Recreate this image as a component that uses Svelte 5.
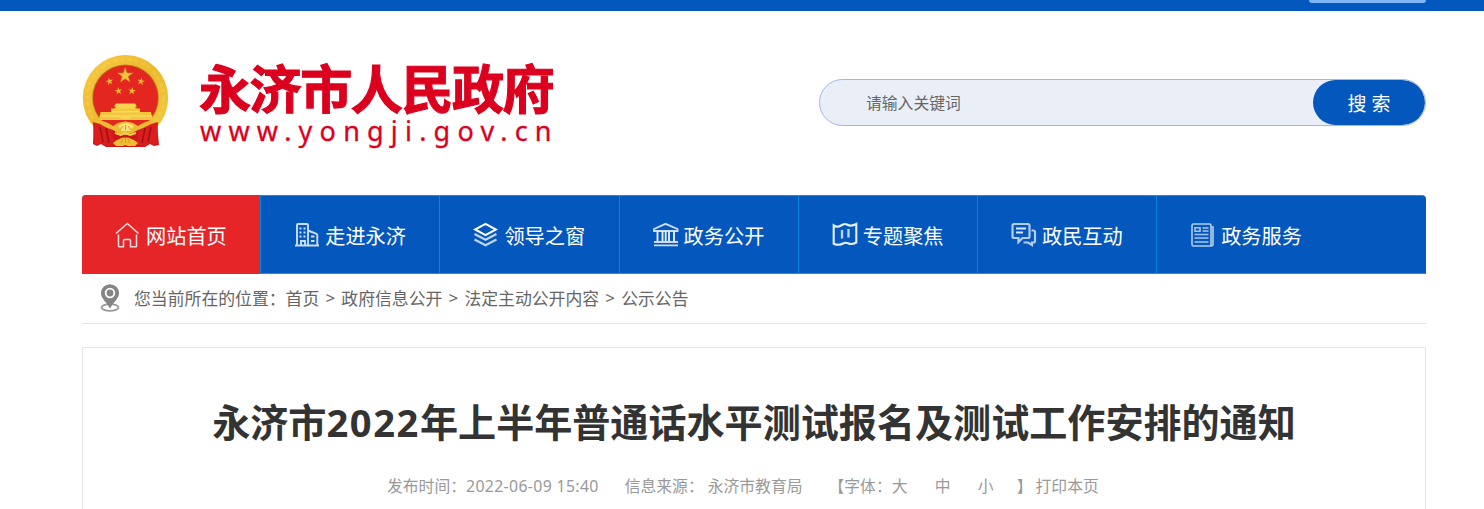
<script lang="ts">
  type NavItem = { label: string; icon: string; active?: boolean };

  const nav: NavItem[] = [
    { label: '网站首页', icon: 'home', active: true },
    { label: '走进永济', icon: 'building' },
    { label: '领导之窗', icon: 'layers' },
    { label: '政务公开', icon: 'bank' },
    { label: '专题聚焦', icon: 'map' },
    { label: '政民互动', icon: 'chat' },
    { label: '政务服务', icon: 'news' }
  ];

  const crumbs = ['首页', '政府信息公开', '法定主动公开内容', '公示公告'];
  const sizes = ['大', '中', '小'];

  const bigStar = '0,-8 1.9,-2.5 7.6,-2.5 3,1 4.7,6.5 0,3.2 -4.7,6.5 -3,1 -7.6,-2.5 -1.9,-2.5';
  const smallStars = [
    [34.5, 36.5, -12],
    [66, 36.5, 12],
    [43.5, 46, -8],
    [57, 46, 8]
  ];
</script>

<div class="topbar">
  <div class="wrap topbar-inner"><span class="topbar-tab"></span></div>
</div>

<div class="wrap">
  <header class="header">
    <div class="logo">
      <svg class="emblem" width="88" height="94" viewBox="6 8 88 94">
        <defs>
          <linearGradient id="gold" x1="0" y1="0" x2="1" y2="1">
            <stop offset="0" stop-color="#f6cb45" />
            <stop offset="0.5" stop-color="#edb92c" />
            <stop offset="1" stop-color="#f3cc43" />
          </linearGradient>
        </defs>
        <ellipse cx="50.5" cy="53" rx="42.7" ry="43" fill="url(#gold)" />
        <ellipse cx="50.5" cy="53" rx="38" ry="38.5" fill="none" stroke="#f9dc63" stroke-width="3" stroke-dasharray="5 2 3 4" opacity="0.3" />
        <ellipse cx="50.5" cy="52.8" rx="33.3" ry="33.3" fill="#b9791d" />
        <ellipse cx="50.5" cy="53" rx="32.4" ry="32.6" fill="#e32720" />
        <polygon points={bigStar} transform="translate(50.2 30.5)" fill="#f4c43b" stroke="#c98a1e" stroke-width="0.5" />
        {#each smallStars as [x, y, r]}
          <polygon points={bigStar} transform="translate({x} {y}) rotate({r}) scale(0.5)" fill="#f0b52e" />
        {/each}
        <path d="M41 58.500h19l2 3h-1.500v2h2v3H38.500v-3h2v-2H39z" fill="#f8d54c" />
        <path d="M36 63.500h29v3.500h11l1.500 8H24l1.500-8H36z" fill="#f4c63b" />
        <path d="M37 66.800h27M24.500 71h53" stroke="#fbe07a" stroke-width="1" />
        <path d="M46 70h9v4h-9z" fill="#f9d650" />
        <path d="M19 80l17 2 8 6h13l8-6 17-2 2 20-5 1-4-2-5 3H31l-5-3-4 2-4-2z" fill="#c9171a" />
        <path d="M18 77l7 2 12 6 3 15-9 1-5-3-3 2-4-1z" fill="#d91e1d" />
        <path d="M83 77l-7 2-12 6-3 15 9 1 5-3 3 2 4-1z" fill="#d91e1d" />
        <path d="M25 82l3 15M31 83l3 15M76 82l-3 15M70 83l-3 15" stroke="#9d0f14" stroke-width="1.400" fill="none" />
        <path d="M22 75q9 1 16 6l5-3q7-3 15 0l5 3q7-5 16-6-6 7-16 10-6 4-13 5-7-1-12-5-11-3-16-10z" fill="#edbb32" />
        <path d="M43 81q8-6 16 0l-4 5h-9z" fill="#f9e077" />
        <path d="M38 98q12-11 25 0l-3 3h-7l-3-1-2 1h-7z" fill="#f0bd34" />
        <path d="M40 88l6 2 4-2 5 2 6-2" stroke="#f7d14a" stroke-width="2" fill="none" />
        <path d="M45 85l3-4M50.500 85v-5M56 85l-3-4M46 98l2-4M50.500 98v-5M55 98l-2-4" stroke="#cf891e" stroke-width="0.800" />
      </svg>
      <div class="logo-text">
        <div class="logo-name">永济市人民政府</div>
        <div class="logo-url">www.yongji.gov.cn</div>
      </div>
    </div>
    <form class="search">
      <input type="text" placeholder="请输入关键词" />
      <button type="button">搜 索</button>
    </form>
  </header>

  <nav class="nav">
    {#each nav as item}
      <a class="nav-item" class:active={item.active} href="#top">
        <svg width="26" height="26" viewBox="0 0 26 26" fill="none" stroke="#fff" stroke-width="1.600">
          {#if item.icon === 'home'}
            <path d="M1 11.500L12.300 1.500l11.200 10M3.500 12.500V24q0 .8.800.8H8.500V18.500q0-1 1-1h5q1 0 1 1v6.300h5.200q.8 0 .8-.8V12.500" stroke-width="1.500" opacity=".85" />
          {:else if item.icon === 'building'}
            <path d="M1 23.500h24M3 23V3q0-1 1-1h9q1 0 1 1v20M14 8.500l8 3.200q1.300.5 1.300 1.500V23M7 23v-4h4v4" stroke-width="1.900" opacity=".8" />
            <path d="M6.500 5.500v2M10.500 5.500v2M6.500 9.500v2M10.500 9.500v2M6.500 13.500v2M10.500 13.500v2M17 14.500h3.500M17 19h3.500" stroke-width="2" opacity=".8" />
          {:else if item.icon === 'layers'}
            <path d="M12.500 1.800L23 7.500l-10.500 5.700L2 7.500z" stroke-width="2" />
            <path d="M1.500 12l11 5.700 11-5.700M1.500 17.500l11 5.700 11-5.700" stroke-width="2.300" opacity=".75" />
          {:else if item.icon === 'bank'}
            <path d="M1 9V7L12.500 1.800 24.500 7v2zM1 20h24M1 23.400h24" stroke-width="1.900" opacity=".8" />
            <path d="M4.500 9.500V19M9.500 9.500V19M12.700 9.500V19M16 9.500V19M21 9.500V19" stroke-width="1.900" opacity=".9" />
          {:else if item.icon === 'map'}
            <path d="M1.700 3.300q3.500 2.700 7.300.2l2-1q2-.9 4 0 4 2.500 9.300-.5v18.500q-4.500 2.500-8.300.7-2.500-1-5 .3-4 2.500-9.300.2z" stroke-width="2.100" opacity=".9" />
            <path d="M10 8v8.500M16.500 7v8.500" stroke-width="2.300" opacity=".75" />
          {:else if item.icon === 'chat'}
            <path d="M3 2h14q1.500 0 1.500 1.500v11q0 1.500-1.500 1.500h-5.500l-4 4v-4H3q-1.500 0-1.500-1.500v-11Q1.500 2 3 2z" stroke-width="2.200" opacity=".7" />
            <path d="M5 6.500h10M5 10.500h7" stroke-width="1.900" opacity=".85" />
            <path d="M20.500 8.500h2q1.500 0 1.500 1.500v9q0 1.500-1.500 1.500H21V23l-4-2.500h-4.500" stroke-width="2.100" opacity=".7" />
          {:else}
            <path d="M3.500 2h16q1.500 0 1.500 1.500V24H3.500Q2 24 2 22.500v-19Q2 2 3.500 2zM21 5h2v17q0 2-2 2" stroke-width="1.600" opacity=".7" />
            <path d="M5 5.700h5v3.600H5zM12.500 6h6M12.500 9h6M4.500 12.500h14M4.500 16h14M4.500 20h14" stroke-width="1.600" opacity=".65" />
          {/if}
        </svg>
        <span>{item.label}</span>
      </a>
    {/each}
  </nav>

  <div class="crumbs">
    <svg width="20" height="28" viewBox="0 0 20 28">
      <ellipse cx="10" cy="23.500" rx="8.500" ry="3.300" fill="none" stroke="#999" stroke-width="1.800" />
      <path d="M10 24.500C7 18.500 1 14.500 1 9.200a9 9 0 0 1 18 0c0 5.300-6 9.300-9 15.300z" fill="#858585" />
      <circle cx="10" cy="9" r="4.300" fill="none" stroke="#fff" stroke-width="1.800" />
    </svg>
    <span>您当前所在的位置：</span>
    {#each crumbs as crumb, i}
      {#if i > 0}<span class="sep">&gt;</span>{/if}
      <span>{crumb}</span>
    {/each}
  </div>

  <main class="article">
    <h1>永济市<span class="year">2022</span>年上半年普通话水平测试报名及测试工作安排的通知</h1>
    <div class="meta">
      <span>发布时间：<span class="date">2022-06-09 15:40</span></span>
      <span class="source">信息来源：</span>
      <span class="dept">永济市教育局</span>
      <span class="font-label">【字体：</span>
      {#each sizes as size}
        <span class="size">{size}</span>
      {/each}
      <span class="close">】</span>
      <span>打印本页</span>
    </div>
  </main>
</div>

<style>
  :global(body) {
    margin: 0;
    background: #fff;
    overflow: hidden;
    font-family: 'Noto Sans', 'Noto Sans CJK SC', sans-serif;
  }

  .wrap {
    width: 1344px;
    margin-left: 82px;
  }

  .topbar {
    height: 11px;
    background: #0458bd;
  }

  .topbar-inner {
    display: flex;
    justify-content: flex-end;
  }

  .topbar-tab {
    width: 117px;
    height: 3px;
    border-radius: 0 0 4px 4px;
    background: #7db7f5;
  }

  .header {
    height: 184px;
    display: flex;
    align-items: flex-start;
    justify-content: space-between;
  }

  .logo {
    display: flex;
    padding-top: 42px;
  }

  .emblem {
    margin-left: -1px;
    flex: none;
  }

  .logo-text {
    margin-left: 30px;
    color: #dc001f;
    white-space: nowrap;
  }

  .logo-name {
    height: 62px;
    line-height: 67px;
    font-family: 'Noto Sans CJK SC', sans-serif;
    font-size: 52px;
    font-weight: 700;
    letter-spacing: -1.4px;
    -webkit-text-stroke: 1.2px #dc001f;
  }

  .logo-url {
    padding-left: 1px;
    line-height: 32px;
    font-size: 27px;
    letter-spacing: 7.2px;
    -webkit-text-stroke: 0.3px #dc001f;
  }

  .search {
    box-sizing: border-box;
    width: 607px;
    height: 47px;
    margin-top: 68px;
    display: flex;
    border: 1px solid #a4b6e2;
    border-radius: 24px;
    background: #eaeff7;
    overflow: hidden;
  }

  .search input {
    flex: 1;
    min-width: 0;
    padding: 0 0 0 46px;
    border: 0;
    background: none;
    font-family: inherit;
    font-size: 15.8px;
    outline: none;
  }

  .search input::placeholder {
    color: #666;
    opacity: 1;
  }

  .search button {
    width: 112px;
    padding: 0;
    border: 0;
    border-radius: 23px;
    background: #0458bd;
    color: #fff;
    font-family: inherit;
    font-size: 19px;
  }

  .nav {
    box-sizing: border-box;
    height: 79px;
    display: flex;
    border-top: 1px solid #3c82cf;
    border-bottom: 1px solid #3c82cf;
    border-radius: 4px 4px 0 0;
    background: #0458bd;
  }

  .nav-item {
    box-sizing: border-box;
    width: 179.2px;
    padding-left: 33px;
    display: flex;
    align-items: center;
    gap: 5px;
    border-right: 1px solid #0785dc;
    color: #fff;
    font-size: 20.2px;
    text-decoration: none;
    white-space: nowrap;
  }

  .nav-item:last-child {
    border-right: 0;
  }

  .nav-item.active {
    margin: -1px 0;
    border-radius: 4px 0 0 0;
    background: #e52528;
  }

  .nav-item span {
    padding-top: 1px;
  }

  .crumbs {
    box-sizing: border-box;
    height: 50px;
    padding: 0 0 2px 18px;
    display: flex;
    align-items: center;
    border-bottom: 1px solid #e6e6e6;
    color: #666;
    font-size: 16.85px;
    white-space: nowrap;
  }

  .crumbs svg {
    margin: 0 14px 0 0;
  }

  .sep {
    width: 22px;
    text-align: center;
  }

  .article {
    box-sizing: border-box;
    height: 180px;
    margin-top: 23px;
    padding-top: 45px;
    border: 1px solid #e6e6e6;
    border-bottom: 0;
  }

  h1 {
    margin: 0;
    color: #333;
    font-size: 38.1px;
    font-weight: 700;
    line-height: 58px;
    text-align: center;
    white-space: nowrap;
  }

  .year {
    letter-spacing: 1.6px;
  }

  .meta {
    margin-top: 23px;
    padding-left: 304px;
    display: flex;
    color: #999;
    font-size: 15.8px;
    line-height: 24px;
    white-space: nowrap;
  }

  .date {
    letter-spacing: 0.36px;
  }

  .source {
    margin-left: 26px;
  }

  .dept {
    margin-left: 4px;
  }

  .font-label {
    margin-left: 26px;
  }

  .size {
    width: 43px;
  }

  .close {
    margin-left: -4px;
    margin-right: 3px;
  }
</style>
